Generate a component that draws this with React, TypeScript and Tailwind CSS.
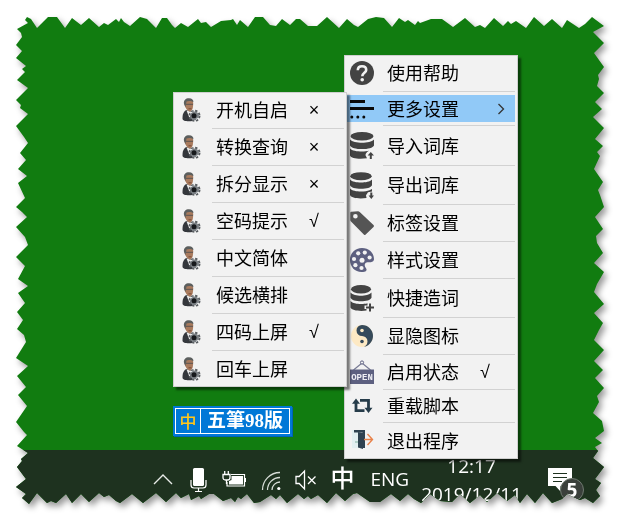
import type { ReactNode } from "react";

/* Torn paper outline, as [x, y] pairs on a 621 x 521 sheet with a 16px margin. */
const TOP = [
  [27, 17], [31, 19], [33, 22], [37, 28], [48, 17], [57, 17], [65, 28], [72, 18], [81, 25], [89, 18], [99, 27],
  [104, 23], [108, 25], [116, 19], [119, 22], [121, 18], [124, 22], [130, 26], [140, 17], [147, 19], [156, 28],
  [162, 18], [167, 18], [172, 25], [175, 28], [181, 23], [188, 27], [198, 19], [201, 23], [206, 22], [211, 27],
  [221, 21], [231, 20], [233, 19], [237, 25], [240, 20], [248, 27], [255, 17], [263, 17], [270, 25], [276, 26],
  [282, 19], [290, 25], [296, 19], [300, 19], [308, 26], [317, 26], [327, 17], [339, 28], [347, 19], [354, 25],
  [358, 27], [368, 19], [376, 17], [384, 18], [392, 27], [399, 18], [405, 22], [408, 20], [415, 25], [418, 21],
  [420, 23], [431, 19], [442, 19], [453, 27], [465, 18], [475, 27], [480, 25], [485, 28], [494, 18], [503, 26],
  [508, 21], [511, 24], [516, 21], [526, 28], [534, 17], [544, 26], [552, 19], [562, 28], [567, 20], [579, 28],
  [585, 24], [592, 17],
];
const RIGHT = [
  [604, 26], [593, 32], [604, 43], [594, 53], [604, 67], [598, 75], [599, 79], [597, 86], [604, 93], [595, 102],
  [602, 109], [593, 117], [604, 128], [595, 139], [603, 146], [597, 152], [600, 156], [594, 169], [603, 182],
  [598, 190], [600, 195], [604, 207], [595, 217], [603, 229], [596, 236], [597, 243], [603, 253], [594, 263],
  [604, 272], [597, 284], [594, 292], [604, 304], [594, 313], [603, 323], [599, 330], [594, 340], [604, 350],
  [594, 361], [603, 370], [595, 378], [604, 388], [597, 396], [599, 402], [593, 413], [602, 421], [604, 431],
  [595, 438], [602, 443], [595, 447], [598, 451], [593, 458], [604, 467], [595, 479], [601, 483], [596, 490],
  [600, 496],
];
const BOTTOM = [
  [593, 503], [585, 498], [580, 500], [567, 494], [562, 499], [552, 503], [543, 493], [535, 503], [527, 494],
  [520, 503], [515, 495], [507, 501], [497, 493], [487, 502], [480, 495], [470, 503], [460, 494], [452, 502],
  [440, 501], [430, 494], [421, 503], [414, 499], [408, 494], [400, 501], [391, 494], [380, 502], [370, 502],
  [357, 493], [353, 494], [345, 501], [336, 493], [327, 503], [318, 495], [311, 499], [308, 496], [304, 499],
  [298, 494], [287, 503], [280, 495], [276, 499], [271, 495], [260, 502], [254, 503], [247, 494], [241, 499],
  [238, 497], [235, 502], [231, 498], [223, 501], [214, 494], [209, 494], [201, 499], [199, 496], [191, 500],
  [189, 494], [181, 498], [176, 493], [166, 502], [156, 493], [143, 503], [132, 494], [120, 503], [116, 501],
  [109, 495], [104, 497], [99, 493], [89, 502], [81, 494], [72, 503], [66, 494], [56, 503], [51, 501], [47, 503],
  [37, 493], [29, 504],
];
const LEFT = [
  [22, 498], [26, 494], [16, 487], [26, 479], [17, 467], [22, 461], [21, 459], [28, 453], [17, 446], [27, 435],
  [24, 432], [16, 422], [27, 406], [18, 395], [26, 387], [17, 376], [28, 366], [16, 358], [26, 342], [24, 335],
  [17, 329], [23, 320], [17, 312], [25, 303], [18, 293], [28, 286], [18, 279], [25, 266], [16, 257], [28, 245],
  [25, 237], [16, 227], [27, 217], [22, 212], [16, 207], [25, 198], [18, 183], [27, 176], [18, 169], [26, 160],
  [20, 153], [28, 143], [24, 137], [16, 126], [28, 114], [20, 108], [21, 105], [16, 100], [28, 88], [17, 80],
  [25, 72], [22, 69], [26, 66], [16, 58], [22, 51], [16, 45], [22, 37], [21, 33], [17, 29], [28, 23], [25, 20],
];

const tornEdge = `polygon(${[...TOP, ...RIGHT, ...BOTTOM, ...LEFT]
  .map(([x, y]) => `${((x - 16) / 589) * 100}% ${((y - 16) / 489) * 100}%`)
  .join(",")})`;

/* ---------- menu icons ---------- */

const HelpIcon = () => (
  <svg viewBox="0 0 24 24" className="h-6 w-6">
    <circle cx="12" cy="12" r="12" fill="#434343" />
    <path d="M7.800 9.200C7.800 6.600 9.500 5.200 12 5.200s4.200 1.500 4.200 3.700c0 2.900-3.900 2.900-3.900 6.400" fill="none" stroke="#f2f2f2" strokeWidth="2.600" />
    <circle cx="12.200" cy="18.700" r="1.800" fill="#f2f2f2" />
  </svg>
);

const MoreIcon = () => (
  <svg viewBox="0 0 24 24" className="h-6 w-6" fill="#0a0a0a">
    <path d="M0 3h15v3H0zM0 10h24v3H0z" />
    <circle cx="1.800" cy="20" r="1.500" />
    <circle cx="7.800" cy="20" r="1.500" />
    <circle cx="13.800" cy="20" r="1.500" />
  </svg>
);

const ImportIcon = () => (
  <svg viewBox="0 0 24 27" className="h-[27px] w-6" fill="#434343">
    <ellipse cx="12" cy="4.200" rx="11.500" ry="4.200" />
    <path d="M0 7.500c2 2.400 7 3.200 12 3.200s10-.8 12-3.200v6c-1 2.500-6 3.600-12 3.600S1 16 0 13.500z" />
    <path d="M0 16.500c2 2.300 7 3 12 3 2.500 0 5-.2 7-.7-2.500 1.200-3.500 3-3.500 4.500l1.500 3C9 27.500 1 26.500 0 23.500z" />
    <path d="M20.800 20l3.200 3.500h-2.200V27h-2v-3.500h-2.200z" />
  </svg>
);

const ExportIcon = () => (
  <svg viewBox="0 0 24 27" className="h-[27px] w-6" fill="#434343">
    <ellipse cx="11" cy="4.200" rx="10.700" ry="4" />
    <path d="M0 7.500c2 2.300 6.500 3 11 3s9-.7 11-3v5.800c-1 2.400-5.500 3.500-11 3.500S1 15.700 0 13.300z" />
    <path d="M0 16.500c2 2.200 6.500 3 11 3 3.500 0 6.500-.4 8.500-1.200L22 17v2.500l-4 .8-2 3 .5 2.700C8.500 27 1 26 0 23z" />
    <path d="M20.300 20.500h2v3H24L21.300 27l-2.700-3.500h1.700z" />
  </svg>
);

const AddWordIcon = () => (
  <svg viewBox="0 0 24 27" className="h-[27px] w-6" fill="#434343">
    <ellipse cx="11" cy="4.200" rx="10" ry="4.200" />
    <path d="M.500 7.500c2 2.300 6.500 3.200 10.500 3.200s8.500-.9 10.500-3.200v5.300c-1 2.400-5.500 3.500-10.500 3.500S1.500 15.200.500 12.800z" />
    <path d="M.500 16c2 2.200 6.500 3 10.500 3 2.500 0 4.500-.2 6.500-.8v2.300h-3v3.600h2v1.400C10 26.500 1.500 25.500.500 22.500z" />
    <path d="M19 18.500h2v3h3v2h-3v3h-2v-3h-3v-2h3z" />
  </svg>
);

const TagIcon = () => (
  <svg viewBox="0 0 24 24" className="h-6 w-6">
    <path
      fillRule="evenodd"
      fill="#555"
      d="M1.500.800 8 .200c.7 0 1.200.2 1.700.7L23.500 14c.6.700.6 1.300 0 1.900l-7.800 7.700c-.6.600-1.300.6-1.900 0L1 10.500c-.5-.5-.7-1-.7-1.700V2c0-.7.500-1.200 1.200-1.200zM5.400 2.900a2.300 2.300 0 1 0 0 4.600 2.300 2.300 0 0 0 0-4.600z"
    />
  </svg>
);

const PaletteIcon = () => (
  <svg viewBox="0 0 24 24" className="h-6 w-6">
    <path d="M12 0C5 0 0 5 0 12s5 12 11.500 12c4.500 0 6-1.700 4.500-3.800-1.500-2.200-1.800-3.700-.5-5.200 1.400-1.500 3.500-.5 5.300-.8 2-.4 3.200-1.400 3.200-3C24 4.500 18.500 0 12 0z" fill="#5d6080" />
    <g fill="#f2f2f2">
      <circle cx="8.200" cy="5.300" r="2.100" />
      <circle cx="14.800" cy="4.600" r="2.100" />
      <circle cx="19.600" cy="9.500" r="2.100" />
      <circle cx="4" cy="11" r="2.100" />
      <circle cx="5.400" cy="17.200" r="2.100" />
      <circle cx="11.500" cy="20" r="2.100" />
      <circle cx="12" cy="12.300" r="2.500" />
    </g>
  </svg>
);

const YinYangIcon = () => (
  <svg viewBox="0 0 24 24" className="h-6 w-6">
    <circle cx="12" cy="12" r="11" fill="#fde9c4" />
    <path d="M12 1a5.500 5.500 0 0 0 0 11 5.500 5.500 0 0 1 0 11 11 11 0 0 0 0-22z" fill="#364a5a" />
    <circle cx="12" cy="6.500" r="1.800" fill="#fde9c4" />
    <circle cx="12" cy="17.500" r="1.800" fill="#364a5a" />
  </svg>
);

const OpenSignIcon = () => (
  <svg viewBox="0 0 24 24" className="h-6 w-6">
    <path d="M3.500 10 12 3l8.500 7" fill="none" stroke="#777a94" strokeWidth="1.200" />
    <circle cx="12" cy="2.500" r="1.600" fill="#f2f2f2" stroke="#5d6080" />
    <path d="M0 9.500h24V24H0z" fill="#5d6080" />
    <text x="12" y="20" textAnchor="middle" fontFamily="'Liberation Mono', monospace" fontSize="9" fontWeight="700" fill="#eeeef4">
      OPEN
    </text>
  </svg>
);

const ReloadIcon = () => (
  <svg viewBox="0 0 24 24" className="h-6 w-6">
    <g fill="none" stroke="#263c4a" strokeWidth="2.800">
      <path d="M6 8v8.600h8.500M10 6.400h8.500V14" />
    </g>
    <path d="M6 4.500 10 9.800H2zM18.500 19l4-5.300h-8z" fill="#263c4a" />
  </svg>
);

const ExitIcon = () => (
  <svg viewBox="0 0 24 24" className="h-6 w-6">
    <path d="M2 1h9v18H2z" fill="#e2eef0" />
    <path d="M4 1h11v18h-2.500V3.500H4z" fill="#2f4250" />
    <path d="M8 3l5 1v16l-5-1.500z" fill="#2f4250" />
    <path d="M5 13h3" stroke="#7fae9c" />
    <path d="M14 10.500h8.500M17.500 5l5 5.500-5 5.500" fill="none" stroke="#e8824a" strokeWidth="1.400" />
  </svg>
);

const PersonIcon = () => (
  <svg viewBox="0 0 24 24" className="h-6 w-6">
    <path d="M3.500 20.500c0-4.500 1-7 4-8.500l6 2v9c-5 .5-10 .3-10-2.500z" fill="#34373c" />
    <path d="M7.500 12.500l3 7.500 2.500-6z" fill="#ececec" />
    <path d="M5.500 5C5.800 2.300 8 1 10 1c2.800 0 4.200 1.600 4.200 4.200 0 3.800-.7 7.800-3.200 8.300C8.200 13 5.200 9 5.500 5z" fill="#a97b5e" />
    <path d="M5 6C4.300 2 7 .200 10 .300c3 .1 4.800 1.700 4.400 4C12.800 3 9.500 2.700 7.500 3.600L6.500 9z" fill="#5c5f5e" />
    <path d="M7 6.300h7" stroke="#5d5550" />
    <path d="M9.500 10.800h3" stroke="#7c4b35" />
    <circle cx="15.500" cy="17.800" r="5" fill="none" stroke="#5a5e62" strokeWidth="2" strokeDasharray="2.300 1.630" />
    <circle cx="15.500" cy="17.800" r="4.400" fill="#7b8085" />
    <circle cx="15" cy="17.800" r="2.500" fill="#17191c" />
    <path d="M11.500 15l2-1M17 21.500l2-1.500" stroke="#e2e4e6" />
  </svg>
);

/* ---------- tray icons ---------- */

const tray = "h-6 w-6";

const ChevronUp = () => (
  <svg viewBox="0 0 24 24" className={tray} fill="none" stroke="#e8ece8" strokeWidth="1.400">
    <path d="M4 16 13 7l9 9" />
  </svg>
);

const Mic = () => (
  <svg viewBox="0 0 24 24" className={tray}>
    <rect x="7" y="0" width="11" height="18" rx="1.500" fill="#fff" />
    <path d="M5 12v5q0 3 3 3h9q3 0 3-3v-5M12.500 20v3.500M9 23.500h7" fill="none" stroke="#fff" strokeWidth="1.200" />
  </svg>
);

const Battery = () => (
  <svg viewBox="0 0 24 24" className={tray}>
    <path d="M9 6.500h13.500V18H5v-4" fill="none" stroke="#fff" strokeWidth="1.200" />
    <path d="M9.500 8H21v8.500H7V13l2.500-1zM22.500 10H24v4h-1.500z" fill="#fff" />
    <path d="M1 6.500h7v3q0 2.500-2.500 2.500h-2Q1 12 1 9.500zM2.700 3v3M6.300 3v3M4.500 12v4" fill="none" stroke="#fff" strokeWidth="1.300" />
  </svg>
);

const Wifi = () => (
  <svg viewBox="0 0 24 24" className={tray} fill="none" stroke="#d5dbd5" strokeWidth="1.300">
    <path d="M4.500 22A17.500 17.500 0 0 1 22 4.500" />
    <path d="M9.500 22A12.500 12.500 0 0 1 22 9.500" />
    <path d="M14 22a8 8 0 0 1 8-8" />
    <circle cx="20.800" cy="20.500" r="1.600" fill="#fff" stroke="none" />
  </svg>
);

const Muted = () => (
  <svg viewBox="0 0 24 24" className={tray} fill="none" stroke="#fff" strokeWidth="1.300">
    <path d="M2 8.500h3.200L10.500 3v18l-5.300-5.500H2zM14 8.500l7.500 7.500M21.500 8.500L14 16" />
  </svg>
);

/* ---------- menus ---------- */

type Entry = { label: string; icon: ReactNode; height: string; mark?: string; active?: boolean };

const mainMenu: Entry[] = [
  { label: "使用帮助", icon: <HelpIcon />, height: "h-[30px]" },
  { label: "更多设置", icon: <MoreIcon />, height: "h-[27px]", active: true },
  { label: "导入词库", icon: <ImportIcon />, height: "h-[33px]" },
  { label: "导出词库", icon: <ExportIcon />, height: "h-8" },
  { label: "标签设置", icon: <TagIcon />, height: "h-[30px]" },
  { label: "样式设置", icon: <PaletteIcon />, height: "h-[30px]" },
  { label: "快捷造词", icon: <AddWordIcon />, height: "h-8" },
  { label: "显隐图标", icon: <YinYangIcon />, height: "h-[30px]" },
  { label: "启用状态", icon: <OpenSignIcon />, height: "h-7", mark: "√" },
  { label: "重载脚本", icon: <ReloadIcon />, height: "h-[26px]" },
  { label: "退出程序", icon: <ExitIcon />, height: "h-[30px]" },
];

const subMenu: Entry[] = [
  ["开机自启", "×"],
  ["转换查询", "×"],
  ["拆分显示", "×"],
  ["空码提示", "√"],
  ["中文简体", ""],
  ["候选横排", ""],
  ["四码上屏", "√"],
  ["回车上屏", ""],
].map(([label, mark]) => ({ label, mark, icon: <PersonIcon />, height: "h-[30px]" }));

function Menu({ entries, label, place }: { entries: Entry[]; label: string; place: string }) {
  return (
    <ul
      role="menu"
      aria-label={label}
      className={`absolute w-[174px] border border-[#cfcfcf] bg-[#f2f2f2] p-[2px] shadow-[3px_3px_2px_rgba(0,0,0,0.5)] ${place}`}
    >
      {entries.map((e, i) => (
        <li key={e.label} role="none">
          {i > 0 && <div role="separator" className="my-[3px] ml-9 h-px bg-[#d2d2d2]" />}
          <button
            type="button"
            role="menuitem"
            className={`flex w-full items-center gap-3 pl-[3px] text-left text-[18px] leading-6 text-black ${e.height} ${
              e.active ? "bg-[#91c9f7]" : "hover:bg-[#91c9f7]"
            }`}
          >
            <span className="flex w-[25px] shrink-0">{e.icon}</span>
            <span className="pb-[2px]">{e.label}</span>
            {e.mark && <span className="ml-1 w-5 text-center font-['Liberation_Sans',sans-serif]">{e.mark}</span>}
            {e.active && (
              <svg viewBox="0 0 8 12" className="mr-[10px] ml-auto h-3 w-2" fill="none" stroke="#333" strokeWidth="1.300">
                <path d="M1.500 1 6.500 6l-5 5" />
              </svg>
            )}
          </button>
        </li>
      ))}
    </ul>
  );
}

export default function App() {
  return (
    <div className="flex min-h-screen bg-white p-4 font-['Noto_Sans_CJK_SC',sans-serif]">
      <div className="flex w-full drop-shadow-[3px_4px_3px_rgba(0,0,0,0.4)]">
        <main
          className="relative flex min-h-[489px] w-full flex-col bg-[#117c10]"
          style={{ clipPath: tornEdge }}
        >
          <div className="flex-1" />

          <footer className="flex h-[55px] items-center justify-end gap-3 bg-[#1e321f] pt-1 pr-[33px] font-['Open_Sans','Noto_Sans_CJK_SC',sans-serif] text-[19px] text-white">
            <div className="mr-1 flex items-center gap-3">
              <button type="button" aria-label="^"><ChevronUp /></button>
              <button type="button" aria-label="麦克风"><Mic /></button>
              <button type="button" aria-label="电池"><Battery /></button>
              <button type="button" aria-label="网络"><Wifi /></button>
              <button type="button" aria-label="音量"><Muted /></button>
              <button type="button" className="w-6 pb-1 text-2xl leading-6 font-medium">中</button>
            </div>
            <button type="button">ENG</button>
            <time dateTime="2019-12-11T12:17" className="mr-[14px] text-center leading-7">
              12:17
              <br />
              2019/12/11
            </time>
            <button type="button" aria-label="通知" className="relative">
              <svg viewBox="0 0 24 24" className="h-6 w-6">
                <path d="M0 0h24v18H12.500v5.500l-5-5.500H0z" fill="#fff" />
                <path d="M5 5.500h14M5 9.500h14M5 13.500h9" stroke="#1e321f" />
              </svg>
              <span className="absolute top-[10px] left-3 flex size-6 items-center justify-center rounded-full border border-[#6f7a70] bg-[#3a403b] text-[19px] leading-6 font-bold">
                5
              </span>
            </button>
          </footer>

          <div className="absolute top-[390px] left-[157px] border-2 border-[#0078d7] bg-[#0078d7] shadow-[1px_1px_0_#0062b4]">
            <div className="flex h-[26px] items-center border border-white leading-6">
              <span className="flex h-full w-[25px] items-center justify-center border-r border-white text-[17px] font-medium text-[#ffc61a]">
                中
              </span>
              <span className="px-[6px] font-['Liberation_Serif','Noto_Sans_CJK_TC',serif] text-[19px] font-semibold text-white">
                五筆98版
              </span>
            </div>
          </div>

          <Menu entries={mainMenu} label="主菜单" place="top-[39px] left-[328px]" />
          <Menu entries={subMenu} label="更多设置" place="top-[76px] left-[157px]" />
        </main>
      </div>
    </div>
  );
}
